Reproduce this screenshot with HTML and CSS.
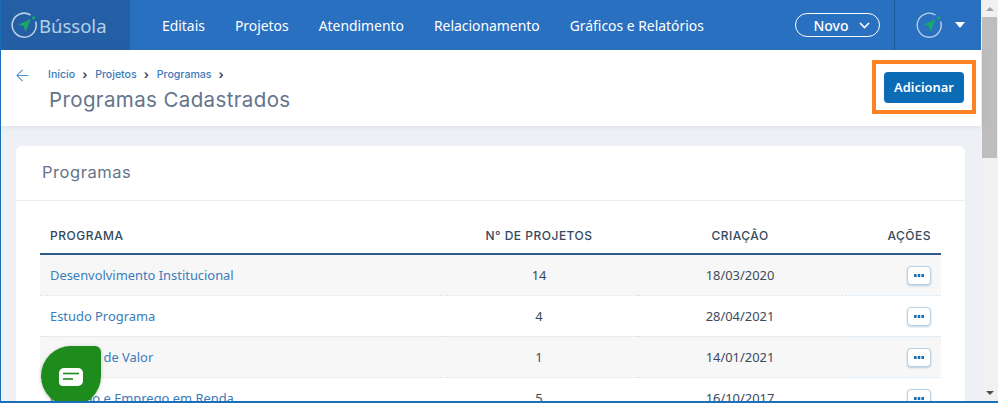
FILE: index.html
```html
<!DOCTYPE html>
<html>
  <head>
    <title>Programas Cadastrados</title>
    <link rel="stylesheet" href="styles.css">
  </head>
  <body>
    <div class="window">
      <div class="page">
        <nav class="topbar">
          <a class="brand">
            <svg class="compass" width="28" height="28" viewBox="0 0 28 28">
              <path d="M20.5 4A12 12 0 1 0 25.6 10.5" fill="none" stroke="#b9cfe6" stroke-width="1.6"/>
              <circle cx="23.7" cy="6.8" r="1.6" fill="#1aa66b"/>
              <path d="M8.5 13.5L21 8L15.5 21L13.5 15Z" fill="#1aa66b"/>
            </svg>
            <span>Bússola</span>
          </a>
          <ul class="menu">
            <li>Editais</li>
            <li>Projetos</li>
            <li>Atendimento</li>
            <li>Relacionamento</li>
            <li>Gráficos e Relatórios</li>
          </ul>
          <button class="novo">Novo
            <svg width="11" height="7" viewBox="0 0 11 7"><path d="M1 1l4.5 4.5L10 1" fill="none" stroke="#fff" stroke-width="1.6"/></svg>
          </button>
          <div class="user">
            <svg class="compass" width="28" height="28" viewBox="0 0 28 28">
              <path d="M20.5 4A12 12 0 1 0 25.6 10.5" fill="none" stroke="#b9cfe6" stroke-width="1.4"/>
              <circle cx="23.7" cy="6.8" r="1.6" fill="#1aa66b"/>
              <path d="M8.5 13.5L21 8L15.5 21L13.5 15Z" fill="#1aa66b"/>
            </svg>
            <span class="caret"></span>
          </div>
        </nav>

        <header class="pagehead">
          <a class="back">
            <svg width="13" height="13" viewBox="0 0 14 14"><path d="M13.5 7H1M7 1L1 7l6 6" fill="none" stroke="#4a8fd0" stroke-width="1.1"/></svg>
          </a>
          <div class="titles">
            <div class="crumbs">
              <a>Início</a><b>›</b><a>Projetos</a><b>›</b><a>Programas</a><b>›</b>
            </div>
            <h1>Programas Cadastrados</h1>
          </div>
          <div class="highlight"><button class="add">Adicionar</button></div>
        </header>

        <main class="content">
          <section class="card">
            <h2>Programas</h2>
            <div class="tablewrap">
              <table>
                <thead>
                  <tr><th class="c1">PROGRAMA</th><th class="c2">N° DE PROJETOS</th><th class="c3">CRIAÇÃO</th><th class="c4">AÇÕES</th></tr>
                </thead>
                <tbody>
                  <tr><td class="c1"><a>Desenvolvimento Institucional</a></td><td class="c2">14</td><td class="c3">18/03/2020</td><td class="c4"><span class="more"><svg width="10" height="3" viewBox="0 0 10 3"><path d="M0 0h2.6v3H0zM3.7 0h2.6v3H3.7zM7.4 0H10v3H7.4z" fill="#1b6fb5"/></svg></span></td></tr>
                  <tr><td class="c1"><a>Estudo Programa</a></td><td class="c2">4</td><td class="c3">28/04/2021</td><td class="c4"><span class="more"><svg width="10" height="3" viewBox="0 0 10 3"><path d="M0 0h2.6v3H0zM3.7 0h2.6v3H3.7zM7.4 0H10v3H7.4z" fill="#1b6fb5"/></svg></span></td></tr>
                  <tr><td class="c1"><a>Geração de Valor</a></td><td class="c2">1</td><td class="c3">14/01/2021</td><td class="c4"><span class="more"><svg width="10" height="3" viewBox="0 0 10 3"><path d="M0 0h2.6v3H0zM3.7 0h2.6v3H3.7zM7.4 0H10v3H7.4z" fill="#1b6fb5"/></svg></span></td></tr>
                  <tr><td class="c1"><a>Geração e Emprego em Renda</a></td><td class="c2">5</td><td class="c3">16/10/2017</td><td class="c4"><span class="more"><svg width="10" height="3" viewBox="0 0 10 3"><path d="M0 0h2.6v3H0zM3.7 0h2.6v3H3.7zM7.4 0H10v3H7.4z" fill="#1b6fb5"/></svg></span></td></tr>
                </tbody>
              </table>
            </div>
          </section>
        </main>
      </div>
      <div class="scrollbar">
        <span class="arrow up"></span>
        <div class="thumb"></div>
        <span class="arrow down"></span>
      </div>
      <a class="chat">
        <svg width="24" height="18" viewBox="0 0 24 18">
          <path d="M5 0h14a5 5 0 0 1 5 5v8a5 5 0 0 1-5 5H4a4 4 0 0 1-4-4V5a5 5 0 0 1 5-5z" fill="#fff"/>
          <path d="M4 5.5h16" stroke="#1d8c1d" stroke-width="1.6"/>
          <path d="M4 11h10" stroke="#1d8c1d" stroke-width="1.6"/>
        </svg>
      </a>
    </div>
  </body>
</html>
```

FILE: styles.css
```css
* {
  box-sizing: border-box;
}
html, body {
  margin: 0;
  padding: 0;
  height: 100%;
  overflow: hidden;
}
body {
  font-family: "Noto Sans", sans-serif;
  color: #3c4a5c;
}
.window {
  position: relative;
  display: flex;
  height: 403px;
  border-left: 1px solid #1a6fb8;
  border-bottom: 2px solid #1a6fb8;
  overflow: hidden;
}
.page {
  flex: 1;
  min-width: 0;
  background: #edf1f5;
}

/* top bar */
.topbar {
  display: flex;
  align-items: center;
  height: 50px;
  background: #2a70c1;
  color: #fff;
}
.brand {
  display: flex;
  align-items: center;
  gap: 1px;
  width: 129px;
  height: 50px;
  padding-left: 9px;
  background: #245fa5;
  color: #b9cfe6;
  font-size: 18.5px;
}
.menu {
  display: flex;
  gap: 30px;
  margin: 0;
  padding: 0 0 0 32px;
  list-style: none;
  font-size: 13.9px;
  flex: 1;
}
.novo {
  display: flex;
  align-items: center;
  justify-content: center;
  gap: 10px;
  width: 85px;
  height: 24px;
  margin-right: 14px;
  padding: 0 0 0 8px;
  border: 1px solid #fff;
  border-radius: 12px;
  background: none;
  color: #fff;
  font: 500 14px "Noto Sans", sans-serif;
}
.user {
  display: flex;
  align-items: center;
  gap: 12px;
  width: 87px;
  height: 50px;
  padding-left: 20px;
  border-left: 1px solid #1f5a9c;
}
.caret {
  border-left: 5px solid transparent;
  border-right: 5px solid transparent;
  border-top: 6px solid #fff;
}

/* page header */
.pagehead {
  position: relative;
  display: flex;
  height: 76px;
  background: #fff;
  box-shadow: 0 1px 6px rgba(60, 80, 110, .1);
}
.back {
  padding: 15px 0 0 15px;
  width: 47px;
}
.titles {
  flex: 1;
  padding-top: 17px;
}
.crumbs {
  display: flex;
  align-items: center;
  height: 14px;
  font-family: Inter, sans-serif;
  font-size: 10.6px;
  font-weight: 500;
  color: #3d7ab8;
}
.crumbs b {
  width: 20px;
  padding-left: 7px;
  font-size: 12px;
  color: #3c4a5c;
}
h1 {
  margin: 6px 0 0 1px;
  font-family: Inter, sans-serif;
  font-size: 20.5px;
  font-weight: 400;
  line-height: 26px;
  color: #64748b;
  letter-spacing: .38px;
}
.highlight {
  display: flex;
  align-items: center;
  justify-content: center;
  width: 104px;
  height: 54px;
  margin: 10px 5px 0 0;
  border: 4px solid #fd8224;
}
.add {
  width: 80px;
  height: 31px;
  border: 0;
  border-radius: 4px;
  background: #0b6cb5;
  color: #fff;
  font: 600 12.9px "Noto Sans", sans-serif;
}

/* card and table */
.content {
  padding: 20px 16px 0 15px;
}
.card {
  height: 300px;
  background: #fff;
  border-radius: 6px;
}
h2 {
  margin: 0;
  height: 55px;
  padding: 15px 0 0 26px;
  border-bottom: 1px solid #e8eef3;
  font-family: Inter, sans-serif;
  font-size: 16.5px;
  font-weight: 400;
  line-height: 22px;
  color: #64748b;
  letter-spacing: .55px;
}
.tablewrap {
  padding: 16px 24px 0;
}
table {
  width: 901px;
  border-collapse: collapse;
  table-layout: fixed;
}
th {
  height: 37px;
  padding-top: 2px;
  border-bottom: 2px solid #2f5a8c;
  font-family: Inter, sans-serif;
  font-size: 12px;
  font-weight: 500;
  letter-spacing: .5px;
  color: #34495e;
}
td {
  height: 41px;
  border-bottom: 1px dotted #d5e2ec;
  font-size: 12.9px;
  color: #3c4a5c;
}
tbody tr:nth-child(odd) {
  background: #f7f7f7;
}
td a {
  color: #3b7cbd;
}
.c1 {
  width: 400px;
  padding-left: 10px;
  text-align: left;
}
.c2 {
  width: 198px;
  text-align: center;
}
.c3 {
  width: 204px;
  text-align: center;
}
.c4 {
  padding-right: 10px;
  text-align: right;
}
.more {
  display: inline-flex;
  align-items: center;
  justify-content: center;
  width: 24px;
  height: 19px;
  border: 1px solid #b5d3e8;
  border-radius: 4px;
  background: #fff;
  box-shadow: 0 1px 2px rgba(60, 100, 140, .3);
  vertical-align: middle;
}

/* scrollbar */
.scrollbar {
  display: flex;
  flex-direction: column;
  align-items: center;
  width: 17px;
  background: #f1f1f1;
}
.thumb {
  width: 15px;
  height: 141px;
  margin-top: 6px;
  background: #bdbdbd;
}
.arrow {
  border-left: 4px solid transparent;
  border-right: 4px solid transparent;
}
.arrow.up {
  margin-top: 7px;
  border-bottom: 4px solid #a3a3a3;
}
.arrow.down {
  margin-top: auto;
  margin-bottom: 6px;
  border-top: 4px solid #505050;
}

/* chat button floats over the table */
.chat {
  position: absolute;
  left: 40px;
  top: 346px;
  display: flex;
  align-items: center;
  justify-content: center;
  width: 60px;
  height: 60px;
  padding-top: 2px;
  border-radius: 50% 6px 50% 50%;
  background: #1d8c1d;
  box-shadow: 0 1px 4px rgba(0, 0, 0, .2);
}
```
